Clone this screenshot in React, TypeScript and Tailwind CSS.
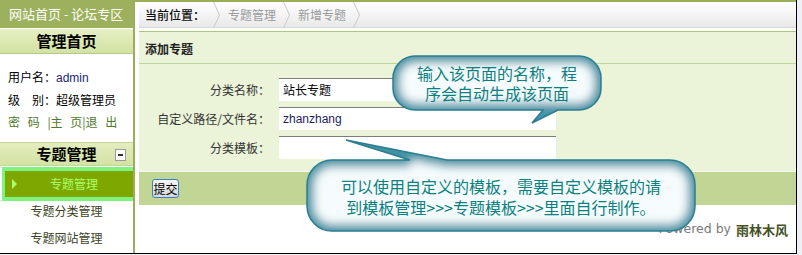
import React from "react";

function Bubble({ id, w, h, d }: { id: string; w: number; h: number; d: string }) {
  return (
    <svg width={w} height={h} viewBox={`0 0 ${w} ${h}`} className="block">
      <defs>
        <clipPath id={`clip-${id}`}>
          <path d={d} />
        </clipPath>
        <filter id={`blur-${id}`} x="-20%" y="-40%" width="140%" height="180%">
          <feGaussianBlur stdDeviation="5" />
        </filter>
      </defs>
      <path d={d} fill="#4f9fb1" />
      <g clipPath={`url(#clip-${id})`}>
        <path d={d} fill="#f6fcfd" stroke="#3f93a6" strokeWidth="14" filter={`url(#blur-${id})`} />
      </g>
      <path d={d} fill="none" stroke="#2c7e90" strokeWidth="1.5" />
    </svg>
  );
}

function Chevron() {
  return (
    <svg width="8" height="26" viewBox="0 0 8 26" className="block shrink-0">
      <polyline points="0.5,0 6.5,13 0.5,26" fill="none" stroke="#c9c9c9" strokeWidth="1" />
    </svg>
  );
}

export default function App() {
  const b1 = "M 25 3 H 189 A 22 22 0 0 1 211 25 V 35 A 22 22 0 0 1 189 57 H 168 L 142 70 L 153 57 H 25 A 22 22 0 0 1 3 35 V 25 A 22 22 0 0 1 25 3 Z";
  const b2 = "M 28 24 H 106 L 42 4 L 143 24 H 366 A 25 25 0 0 1 391 49 V 70 A 25 25 0 0 1 366 95 H 28 A 25 25 0 0 1 3 70 V 49 A 25 25 0 0 1 28 24 Z";
  return (
    <div className="relative w-[802px] h-[255px] overflow-hidden bg-[#eef0f5] font-['Noto_Sans_CJK_SC',sans-serif] text-[12px] text-black">
      <div className="flex w-[797px] h-[254px] bg-white border-r border-b border-black">
        {/* Sidebar */}
        <aside className="w-[135px] shrink-0 flex flex-col border-r-2 border-[#9aae5a] bg-white">
          <div className="h-[28px] bg-[#9cb05d] text-white text-[13px] leading-[28px] pl-[9px] whitespace-nowrap">
            网站首页 - 论坛专区
          </div>
          <div className="h-[25px] mt-[1px] bg-gradient-to-b from-[#e6f0c4] to-[#d2e2a2] border-b border-[#b5c98a] flex items-center justify-center text-[15px] font-bold">
            管理首页
          </div>
          <div className="h-[88px] pt-[12px] pl-[8px] leading-[22px] text-[12px]">
            <div>
              用户名：<span className="font-['Liberation_Sans',sans-serif] text-[#24246e]">admin</span>
            </div>
            <div>级　别：超级管理员</div>
            <div className="text-[#4f7a2a] whitespace-nowrap [word-spacing:5px]">密 码 |主 页|退 出</div>
          </div>
          <div className="relative h-[24px] bg-gradient-to-b from-[#e3edbe] to-[#d3e2a4] border-y border-[#c4d69a] flex items-center justify-center text-[15px] font-bold">
            专题管理
            <span className="absolute right-[7px] top-[6px] w-[11px] h-[12px] bg-white border border-[#9a9a9a] flex items-center justify-center">
              <span className="w-[5px] h-[2px] bg-[#333]" />
            </span>
          </div>
          <div className="mt-[1px] ml-[2px] h-[34px] bg-[#7ff27f] pl-[3px] py-[4px]">
            <div className="relative h-full bg-[#7ea700] flex items-center justify-center text-[#a8ff6c] text-[12px]">
              <span className="absolute left-[7px] top-[8px] w-0 h-0 border-y-[5px] border-y-transparent border-l-[5px] border-l-[#a8ff6c]" />
              <span className="pl-[10px]">专题管理</span>
            </div>
          </div>
          <div className="flex flex-col items-center text-[#3c4424] text-[12px]">
            <div className="h-[20px] leading-[20px]">专题分类管理</div>
            <div className="h-[20px] leading-[20px] mt-[7px]">专题网站管理</div>
          </div>
        </aside>

        {/* Content */}
        <div className="flex-1 flex flex-col border-t-2 border-[#9aae5a] pl-[4px]">
          <div className="h-[26px] bg-gradient-to-b from-white to-[#e9e9e9] border-b border-[#d8d8d8] flex items-center pl-[6px] text-[12px]">
            <span className="text-[#111] font-medium pr-[8px]">当前位置：</span>
            <Chevron />
            <span className="text-[#9a9a9a] px-[7px]">专题管理</span>
            <Chevron />
            <span className="text-[#9a9a9a] px-[7px]">新增专题</span>
            <Chevron />
          </div>
          <div className="mt-[3px] border-t border-[#a9c77d] bg-[#ebf3d9] flex flex-col">
            <div className="h-[32px] border-b border-[#bcd59b] flex items-center pl-[6px] pt-[2px] font-bold text-[#222]">
              添加专题
            </div>
            <div className="grid grid-cols-[131px_277px] gap-x-[9px] gap-y-[6px] pt-[14px] pb-[12px] border-b border-[#f6f9ee] text-[#333]">
              <div className="h-[23px] flex items-center justify-end">分类名称：</div>
              <div className="h-[23px] bg-white border-t border-[#7d7d7d] flex items-center pl-[4px] text-black">站长专题</div>
              <div className="h-[23px] flex items-center justify-end">自定义路径/文件名：</div>
              <div className="h-[23px] bg-white border-t border-[#7d7d7d] flex items-center pl-[4px] font-['Liberation_Sans',sans-serif] text-[#1d1d5c]">zhanzhang</div>
              <div className="h-[23px] flex items-center justify-end">分类模板：</div>
              <div className="h-[23px] bg-white border-t border-[#7d7d7d]" />
            </div>
            <div className="h-[33px] bg-[#c1d595] flex items-center pl-[13px]">
              <button className="w-[27px] h-[19px] p-0 border border-[#3b80c6] rounded-[3px] bg-gradient-to-b from-[#f6f6f6] to-[#d6d6d6] text-[12px] leading-[16px] text-black">
                提交
              </button>
            </div>
          </div>
          <div className="flex-1 flex items-center justify-end pr-[8px] pt-[1px]">
            <span className="font-['DejaVu_Sans',sans-serif] text-[12.5px] text-[#7a7a7a] pr-[5px]">Powered by</span>
            <span className="font-bold text-[13px] text-[#45521f]">雨林木风</span>
          </div>
        </div>
      </div>

      {/* Callout 1 */}
      <div className="absolute left-[390px] top-[53px]">
        <Bubble id="a" w={216} h={74} d={b1} />
      </div>
      <div className="absolute left-[393px] top-[56px] w-[208px] h-[54px] flex items-center justify-center">
        <p className="text-center text-[16px] leading-[20px] text-[#0a8080]">
          输入该页面的名称，程
          <br />
          序会自动生成该页面
        </p>
      </div>

      {/* Callout 2 */}
      <div className="absolute left-[304px] top-[136px]">
        <Bubble id="b" w={396} h={100} d={b2} />
      </div>
      <div className="absolute left-[307px] top-[162px] w-[388px] h-[69px] flex items-center justify-center">
        <p className="text-center text-[16px] leading-[21px] text-[#0a8080] whitespace-nowrap">
          可以使用自定义的模板，需要自定义模板的请
          <br />
          到模板管理&gt;&gt;&gt;专题模板&gt;&gt;&gt;里面自行制作。
        </p>
      </div>
    </div>
  );
}
